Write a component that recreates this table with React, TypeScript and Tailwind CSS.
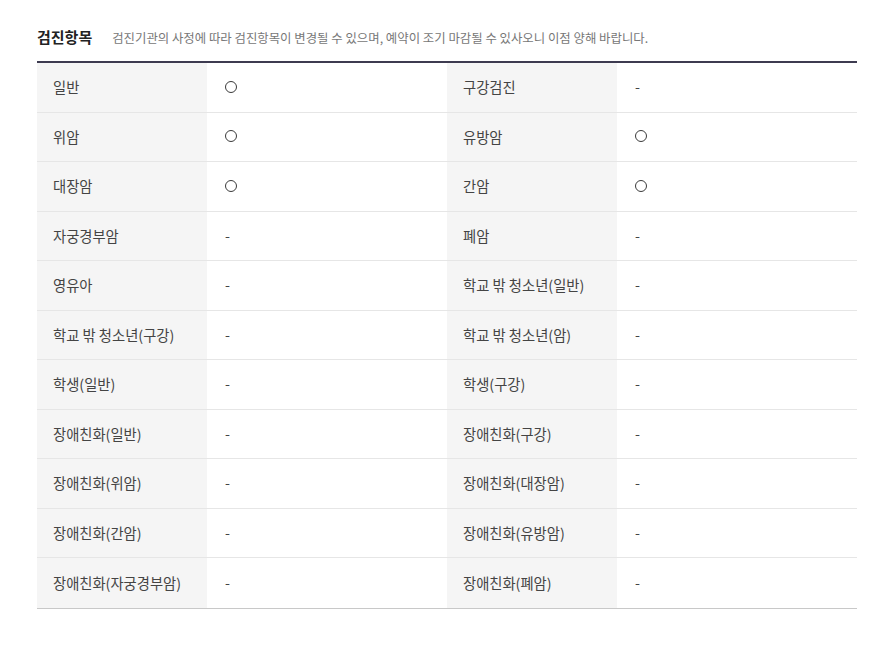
import React from 'react'

const rows: [string, string, string, string][] = [
  ['일반', '○', '구강검진', '-'],
  ['위암', '○', '유방암', '○'],
  ['대장암', '○', '간암', '○'],
  ['자궁경부암', '-', '폐암', '-'],
  ['영유아', '-', '학교 밖 청소년(일반)', '-'],
  ['학교 밖 청소년(구강)', '-', '학교 밖 청소년(암)', '-'],
  ['학생(일반)', '-', '학생(구강)', '-'],
  ['장애친화(일반)', '-', '장애친화(구강)', '-'],
  ['장애친화(위암)', '-', '장애친화(대장암)', '-'],
  ['장애친화(간암)', '-', '장애친화(유방암)', '-'],
  ['장애친화(자궁경부암)', '-', '장애친화(폐암)', '-'],
]

function Mark({ v }: { v: string }) {
  if (v === '○') {
    return <span className="inline-block w-[12px] h-[12px] rounded-full border-[1.6px] border-[#3a3a3a]" />
  }
  return <span>-</span>
}

export default function App() {
  return (
    <div
      className="w-[884px] h-[645px] bg-white text-[#333]"
      style={{ fontFamily: '"Noto Sans CJK KR", "Noto Sans", sans-serif' }}
    >
      <div className="pl-[37px] pr-[27px] pt-[26px]">
        {/* Title */}
        <div className="flex items-baseline h-[22px]">
          <h3 className="text-[15px] font-bold text-[#222]">검진항목</h3>
          <p className="ml-[20px] text-[12.4px] text-[#777]">
            검진기관의 사정에 따라 검진항목이 변경될 수 있으며, 예약이 조기 마감될 수 있사오니 이점 양해 바랍니다.
          </p>
        </div>

        {/* Table */}
        <div className="mt-[13px] border-t-2 border-[#3d3b50] border-b border-b-[#c8c8c8]">
          {rows.map((r, i) => (
            <div
              key={i}
              className={`grid grid-cols-[170px_240px_170px_240px] h-[49.5px] text-[14.3px] ${
                i < rows.length - 1 ? 'border-b border-[#e6e6e6]' : ''
              }`}
            >
              <div className="bg-[#f5f5f5] flex items-center pl-[16px] pb-px text-[#444]">{r[0]}</div>
              <div className="flex items-center pl-[18px] pb-px text-[#444]">
                <Mark v={r[1]} />
              </div>
              <div className="bg-[#f5f5f5] flex items-center pl-[16px] pb-px text-[#444]">{r[2]}</div>
              <div className="flex items-center pl-[18px] pb-px text-[#444]">
                <Mark v={r[3]} />
              </div>
            </div>
          ))}
        </div>
      </div>
    </div>
  )
}
